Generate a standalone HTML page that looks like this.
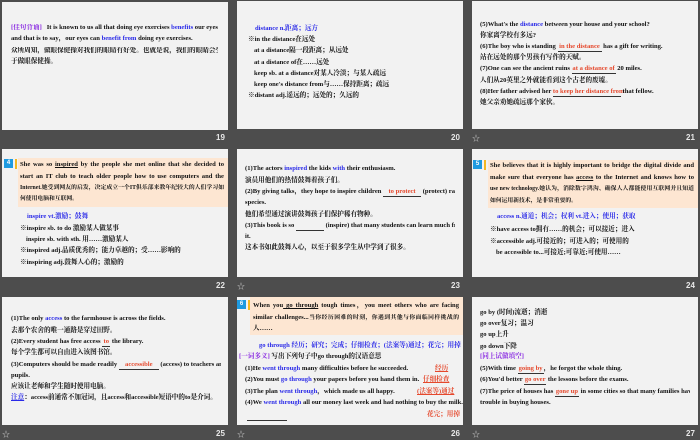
<!DOCTYPE html>
<html><head><meta charset="utf-8"><style>
*{margin:0;padding:0;box-sizing:border-box}
body{width:700px;height:438px;background:#4d4d4d;position:relative;overflow:hidden;font-family:"Liberation Serif","Noto Serif CJK SC",serif;}
.s{position:absolute;width:226px;height:128px;background:#f2f2f2;overflow:hidden}
.l{position:absolute;font-size:6.6px;font-weight:bold;color:#111;white-space:nowrap;line-height:8px}
.j{white-space:nowrap;text-align:justify;text-align-last:justify;overflow:hidden}
.b{color:#2a2ae8}.r{color:#e5482c}.p{color:#8a2be2}
.u{text-decoration:underline}
.n{position:absolute;color:#e8e8e8;font:bold 8px "Liberation Sans",sans-serif}
.st{position:absolute;color:#ccc;font-size:8px}
.box{position:absolute;background:#fde6d2}
.sq{position:absolute;width:9px;height:9px;background:#1e9ae0;color:#fff;font:bold 6px "Liberation Sans",sans-serif;text-align:center;line-height:9px}
.yb{position:absolute;width:2px;height:10px;background:#f5b820}
.bl{display:inline-block;border-bottom:0.7px solid #333;text-align:center;text-align-last:center}
</style></head><body>

<!-- 19 -->
<div class="s" style="left:2px;top:2px">
<div class="l j" style="left:9px;top:22px;width:207px"><span class="p">[佳句背诵]</span>&nbsp;&nbsp; It is known to us all that doing eye exercises <span class="b">benefits</span> our eyes,</div>
<div class="l" style="left:9px;top:33px">and that is to say，our eyes can <span class="b">benefit from</span> doing eye exercises.</div>
<div class="l j" style="left:9px;top:45px;width:207px">众所周知，做眼保健操对我们的眼睛有好处。也就是说，我们的眼睛会受益</div>
<div class="l" style="left:9px;top:56px">于做眼保健操。</div>
</div>
<div class="n" style="left:216px;top:133px">19</div>

<!-- 20 -->
<div class="s" style="left:237px;top:1px">
<div class="l b" style="left:18px;top:24px">distance n.距离；远方</div>
<div class="l" style="left:11px;top:35px">※in the distance在远处</div>
<div class="l" style="left:17px;top:46px">at a distance隔一段距离；从远处</div>
<div class="l" style="left:17px;top:58px">at a distance of在……远处</div>
<div class="l" style="left:17px;top:69px">keep sb. at a distance对某人冷淡；与某人疏远</div>
<div class="l" style="left:17px;top:80px">keep one's distance from与……保持距离；疏远</div>
<div class="l" style="left:11px;top:91px">※distant adj.遥远的；远处的；久远的</div>
</div>
<div class="n" style="left:451px;top:133px">20</div>

<!-- 21 -->
<div class="s" style="left:472px;top:1px">
<div class="l" style="left:8px;top:20px">(5)What's the <span class="b">distance</span> between your house and your school?</div>
<div class="l" style="left:8px;top:31px">你家离学校有多远?</div>
<div class="l" style="left:8px;top:42px">(6)The boy who is standing <span class="bl r" style="width:44px">in the distance</span> has a gift for writing.</div>
<div class="l" style="left:8px;top:53px">站在远处的那个男孩有写作的天赋。</div>
<div class="l" style="left:8px;top:64px">(7)One can see the ancient ruins <span class="bl r" style="width:44px">at a distance of</span> 20 miles.</div>
<div class="l" style="left:8px;top:76px">人们从20英里之外就能看到这个古老的废墟。</div>
<div class="l" style="left:8px;top:87px">(8)Her father advised her <span class="bl r" style="width:68px">to keep her distance from</span> that fellow.</div>
<div class="l" style="left:8px;top:98px">她父亲劝她疏远那个家伙。</div>
</div>
<div class="st" style="left:472px;top:133px">☆</div>
<div class="n" style="left:686px;top:133px">21</div>

<!-- 22 -->
<div class="s" style="left:2px;top:149px">
<div class="box" style="left:16px;top:9px;width:210px;height:49px"></div>
<div class="sq" style="left:2px;top:10px">4</div><div class="yb" style="left:13px;top:10px"></div>
<div class="l j" style="left:18px;top:12px;width:204px">She was so <span class="u">inspired</span> by the people she met online that she decided to</div>
<div class="l j" style="left:18px;top:24px;width:204px">start an IT club to teach older people how to use computers and the</div>
<div class="l j" style="left:18px;top:35px;width:204px;font-size:5.8px">Internet.她受到网友的启发，决定成立一个IT俱乐部来教年纪较大的人们学习如</div>
<div class="l" style="left:18px;top:46px;font-size:5.8px">何使用电脑和互联网。</div>
<div class="l b" style="left:25px;top:64px">inspire vt.激励；鼓舞</div>
<div class="l" style="left:18px;top:76px">※inspire sb. to do 激励某人做某事</div>
<div class="l" style="left:24px;top:87px">inspire sb. with sth. 用……激励某人</div>
<div class="l" style="left:18px;top:98px">※inspired adj.品质优秀的；能力卓越的；受……影响的</div>
<div class="l" style="left:18px;top:110px">※inspiring adj.鼓舞人心的；激励的</div>
</div>
<div class="n" style="left:216px;top:281px">22</div>

<!-- 23 -->
<div class="s" style="left:237px;top:149px">
<div class="l" style="left:8px;top:16px">(1)The actors <span class="b">inspired</span> the kids <span class="b">with</span> their enthusiasm.</div>
<div class="l" style="left:8px;top:28px">演员用他们的热情鼓舞着孩子们。</div>
<div class="l j" style="left:8px;top:39px;width:210px">(2)By giving talks，they hope to inspire children <span class="bl r" style="width:38px">to protect</span> (protect) rare</div>
<div class="l" style="left:8px;top:50px">species.</div>
<div class="l" style="left:8px;top:62px">他们希望通过演讲鼓舞孩子们保护稀有物种。</div>
<div class="l j" style="left:8px;top:73px;width:210px">(3)This book is so <span class="bl" style="width:28px">&nbsp;</span> (inspire) that many students can learn much from</div>
<div class="l" style="left:8px;top:84px">it.</div>
<div class="l" style="left:8px;top:95px">这本书如此鼓舞人心，以至于很多学生从中学到了很多。</div>
</div>
<div class="st" style="left:237px;top:281px">☆</div>
<div class="n" style="left:451px;top:281px">23</div>

<!-- 24 -->
<div class="s" style="left:472px;top:149px">
<div class="box" style="left:16px;top:11px;width:210px;height:48px"></div>
<div class="sq" style="left:1px;top:11px">5</div><div class="yb" style="left:12px;top:11px"></div>
<div class="l j" style="left:18px;top:13px;width:204px">She believes that it is highly important to bridge the digital divide and</div>
<div class="l j" style="left:18px;top:25px;width:204px">make sure that everyone has <span class="u">access</span> to the Internet and knows how to</div>
<div class="l j" style="left:18px;top:36px;width:204px;font-size:5.8px">use new technology.她认为，消除数字鸿沟、确保人人都能使用互联网并且知道</div>
<div class="l" style="left:18px;top:48px;font-size:5.8px">如何运用新技术，是非常重要的。</div>
<div class="l b" style="left:25px;top:64px">access n.通道；机会；权利 vt.进入；使用；获取</div>
<div class="l" style="left:18px;top:77px">※have access to拥有……的机会；可以接近；进入</div>
<div class="l" style="left:18px;top:89px">※accessible adj.可接近的；可进入的；可使用的</div>
<div class="l" style="left:24px;top:100px">be accessible to...可接近;可靠近;可使用……</div>
</div>
<div class="n" style="left:686px;top:281px">24</div>

<!-- 25 -->
<div class="s" style="left:2px;top:297px">
<div class="l" style="left:9px;top:18px">(1)The only <span class="b">access</span> to the farmhouse is across the fields.</div>
<div class="l" style="left:9px;top:30px">去那个农舍的唯一通路是穿过田野。</div>
<div class="l" style="left:9px;top:41px">(2)Every student has free access <span class="bl r" style="width:8px">to</span> the library.</div>
<div class="l" style="left:9px;top:52px">每个学生都可以自由进入该图书馆。</div>
<div class="l j" style="left:9px;top:64px;width:210px">(3)Computers should be made readily <span class="bl r" style="width:40px">accessible</span> (access) to teachers and</div>
<div class="l" style="left:9px;top:75px">pupils.</div>
<div class="l" style="left:9px;top:86px">应该让老师和学生随时使用电脑。</div>
<div class="l" style="left:9px;top:97px"><span class="b u">注意</span>：access前通常不加冠词，且access和accessible短语中的to是介词。</div>
</div>
<div class="st" style="left:2px;top:429px">☆</div>
<div class="n" style="left:216px;top:429px">25</div>

<!-- 26 -->
<div class="s" style="left:237px;top:297px">
<div class="box" style="left:13px;top:0px;width:213px;height:38px"></div>
<div class="sq" style="left:0px;top:3px">6</div><div class="yb" style="left:11px;top:3px"></div>
<div class="l j" style="left:16px;top:5px;width:206px">When you<span class="u"> go through</span> tough times，you meet others who are facing</div>
<div class="l j" style="left:16px;top:17px;width:206px">similar challenges...<span style="font-size:5.8px">当你经历困难的时刻，你遇到其他与你面临同样挑战的</span></div>
<div class="l" style="left:16px;top:28px">人……</div>
<div class="l b" style="left:22px;top:45px">go through 经历；研究；完成；仔细检查；(法案等)通过；花完；用掉</div>
<div class="l" style="left:2px;top:56px"><span class="p">[一词多义]</span> 写出下列句子中go through的汉语意思</div>
<div class="l" style="left:8px;top:68px">(1)He <span class="b">went through</span> many difficulties before he succeeded.</div>
<div class="l r" style="left:198px;top:68px"><span class="u">经历</span></div>
<div class="l" style="left:8px;top:79px">(2)You must <span class="b">go through</span> your papers before you hand them in.</div>
<div class="l r" style="left:186px;top:79px"><span class="u">仔细检查</span></div>
<div class="l" style="left:8px;top:91px">(3)The plan <span class="b">went through</span>，which made us all happy.</div>
<div class="l r" style="left:180px;top:91px"><span class="u">(法案等)通过</span></div>
<div class="l" style="left:8px;top:102px">(4)We <span class="b">went through</span> all our money last week and had nothing to buy the milk.</div>
<div class="l r" style="left:190px;top:114px">花完；用掉</div>
<div style="position:absolute;left:10px;top:123px;width:40px;border-top:0.7px solid #333"></div>
</div>
<div class="st" style="left:237px;top:429px">☆</div>
<div class="n" style="left:451px;top:429px">26</div>

<!-- 27 -->
<div class="s" style="left:472px;top:297px">
<div class="l" style="left:8px;top:12px">go by (时间)流逝；消逝</div>
<div class="l" style="left:8px;top:23px">go over复习；温习</div>
<div class="l" style="left:8px;top:34px">go up上升</div>
<div class="l" style="left:8px;top:46px">go down下降</div>
<div class="l p" style="left:8px;top:56px">[同上试做填空]</div>
<div class="l" style="left:8px;top:68px">(5)With time <span class="bl r" style="width:26px">going by</span>，he forgot the whole thing.</div>
<div class="l" style="left:8px;top:79px">(6)You'd better <span class="bl r" style="width:22px">go over</span> the lessons before the exams.</div>
<div class="l j" style="left:8px;top:91px;width:210px">(7)The price of houses has <span class="bl r" style="width:24px">gone up</span> in some cities so that many families have</div>
<div class="l" style="left:8px;top:102px">trouble in buying houses.</div>
</div>
<div class="st" style="left:472px;top:429px">☆</div>
<div class="n" style="left:686px;top:429px">27</div>

</body></html>
